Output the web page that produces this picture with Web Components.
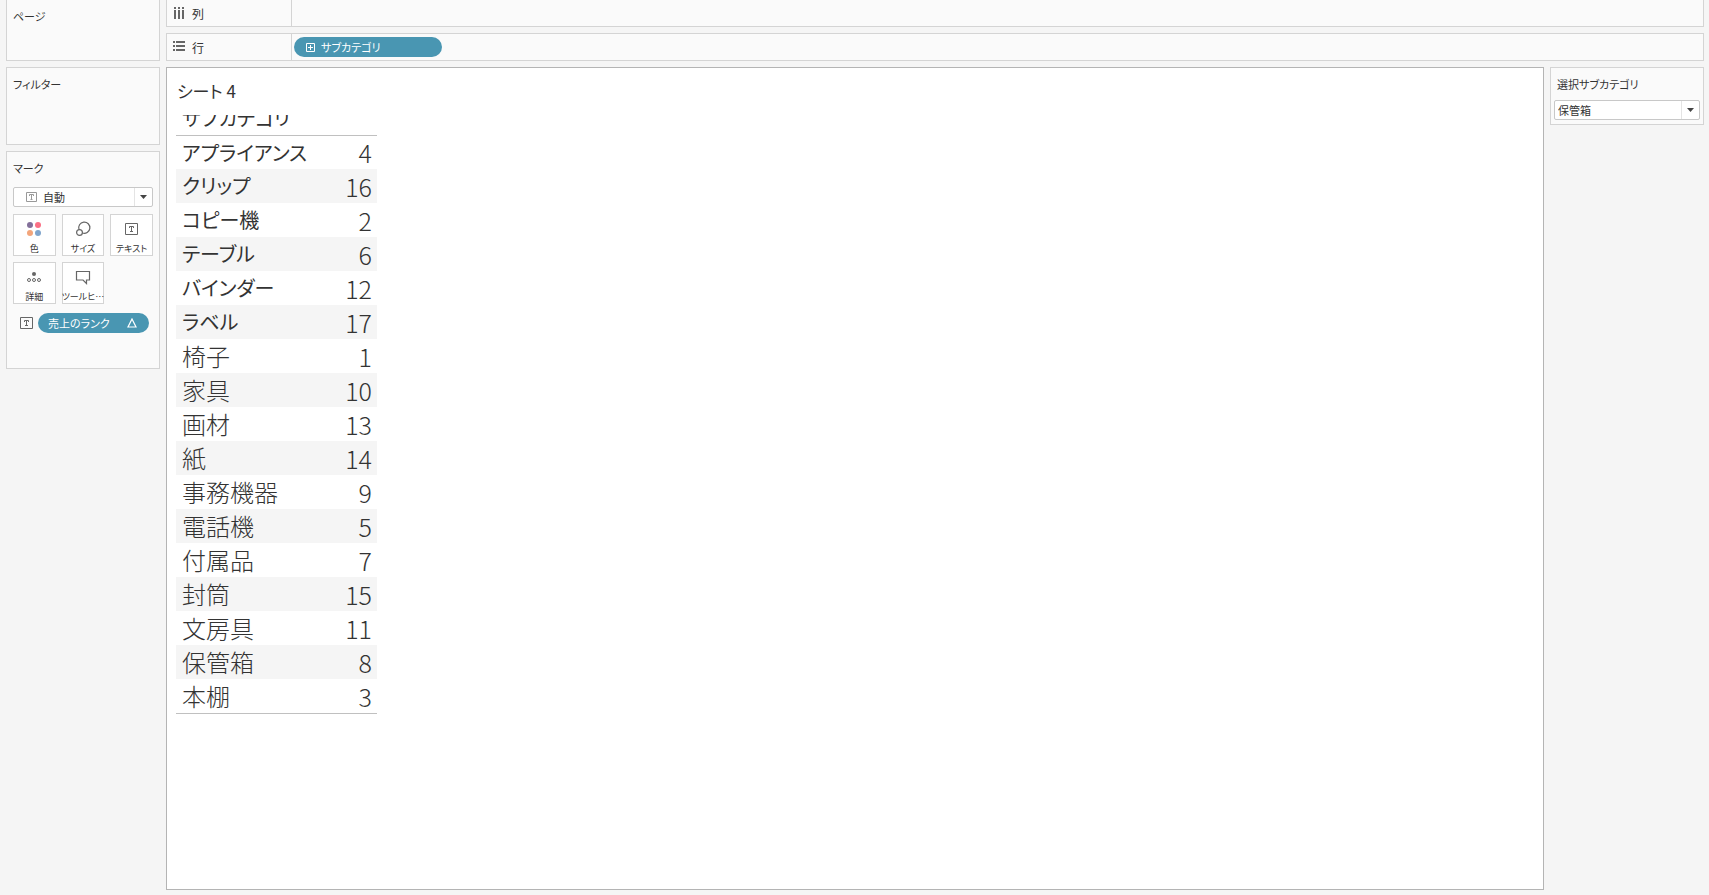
<!DOCTYPE html>
<html lang="ja">
<head>
<meta charset="UTF-8">
<meta name="viewport" content="width=device-width, initial-scale=1">
<title>シート 4</title>
<style>
    body {
        margin: 0;
        background-color: #f5f5f5;
        color: #333;
        font-family: "Noto Sans CJK JP", sans-serif;
        font-size: 11px;
        font-feature-settings: "palt";
    }
</style>
</head>
<body>
<sheet-app></sheet-app>

<script>
const ICONS = {
    columns: '<svg width="12" height="13" viewBox="0 0 12 13" fill="#666"><path d="M1 0h2v2H1zM5 0h2v2H5zM9 0h2v2H9zM1 3h2v9H1zM5 3h2v9H5zM9 3h2v9H9z"/></svg>',
    rows: '<svg width="12" height="12" viewBox="0 0 12 12" fill="#666"><path d="M0 0h2v2H0zM0 4h2v2H0zM0 8h2v2H0zM3 0h9v2H3zM3 4h9v2H3zM3 8h9v2H3z"/></svg>',
    plus: '<svg width="9" height="9" viewBox="0 0 9 9" fill="none" stroke="#fff"><path d="M.5.5h8v8h-8zM2 4.5h5M4.5 2v5"/></svg>',
    delta: '<svg width="10" height="10" viewBox="0 0 10 10" fill="none" stroke="#fff" stroke-width="1.2"><path d="M5 1L9 9H1z"/></svg>',
    text: '<svg width="13" height="12" viewBox="0 0 13 12" fill="none" stroke="#666"><path d="M.5.5h12v11H.5z"/><path d="M4.5 5V3.5h4V5M6.5 3.5v5M5 8.5h3"/></svg>',
    textSmall: '<svg width="11" height="10" viewBox="0 0 11 10" fill="none" stroke="#999"><path d="M.5.5h10v9H.5z"/><path d="M3.5 4V2.5h4V4M5.5 2.5v5M4.5 7.5h2"/></svg>',
    arrow: '<svg width="7" height="4" viewBox="0 0 7 4" fill="#444"><path d="M0 0h7L3.5 4z"/></svg>',
    color: '<svg width="16" height="16" viewBox="0 0 16 16"><circle cx="4" cy="4" r="3" fill="#83709a"/><circle cx="12" cy="4" r="3" fill="#fb7085"/><circle cx="4" cy="12" r="3" fill="#f3a57b"/><circle cx="12" cy="12" r="3" fill="#80a5cc"/></svg>',
    size: '<svg width="16" height="16" viewBox="0 0 16 16" fill="none" stroke="#666" stroke-width="1.2"><path d="M4 8.6A5.600 5.600 0 1 1 7.400 12"/><circle cx="4.500" cy="11.500" r="2.900"/></svg>',
    detail: '<svg width="16" height="16" viewBox="0 0 16 16" fill="none" stroke="#666"><circle cx="8" cy="5" r="2" fill="#666" stroke="none"/><circle cx="3" cy="11" r="1.500"/><circle cx="8" cy="11" r="1.500"/><circle cx="13" cy="11" r="1.500"/></svg>',
    tooltip: '<svg width="16" height="16" viewBox="0 0 16 16" fill="none" stroke="#666" stroke-width="1.2"><path d="M1.500 2.500h13v8.500h-3v3.500L8 11H1.500z"/></svg>'
};

class ShelfCard extends HTMLElement {
    constructor() {
        super();
        this.attachShadow({ mode: 'open' });
    }

    connectedCallback() {
        this.shadowRoot.innerHTML = `
            <style>
                :host {
                    display: block;
                    box-sizing: border-box;
                    padding: 8px 6px;
                    border: 1px solid #d4d4d4;
                    background-color: #fafafa;
                }
                h2 {
                    margin: 0;
                    font-size: 11px;
                    font-weight: 400;
                    line-height: 16px;
                }
            </style>
            <h2>${this.getAttribute('heading')}</h2>
            <slot></slot>
        `;
    }
}

class DropShelf extends HTMLElement {
    constructor() {
        super();
        this.attachShadow({ mode: 'open' });
    }

    connectedCallback() {
        this.shadowRoot.innerHTML = `
            <style>
                :host {
                    display: flex;
                    box-sizing: border-box;
                    height: 28px;
                    border: 1px solid #d4d4d4;
                    background-color: #fafafa;
                }
                .label {
                    display: flex;
                    align-items: center;
                    gap: 7px;
                    box-sizing: border-box;
                    width: 125px;
                    padding-left: 6px;
                    border-right: 1px solid #d4d4d4;
                    font-size: 12px;
                }
                .drop {
                    display: flex;
                    flex: 1;
                    align-items: center;
                    padding-left: 2px;
                }
            </style>
            <div class="label">${ICONS[this.getAttribute('icon')]}<span>${this.getAttribute('label')}</span></div>
            <div class="drop"><slot></slot></div>
        `;
    }
}

class FieldPill extends HTMLElement {
    constructor() {
        super();
        this.attachShadow({ mode: 'open' });
    }

    connectedCallback() {
        const before = this.hasAttribute('expand') ? ICONS.plus : '';
        const after = this.hasAttribute('calc') ? ICONS.delta : '';

        this.shadowRoot.innerHTML = `
            <style>
                :host {
                    display: block;
                }
                button {
                    display: flex;
                    align-items: center;
                    gap: 6px;
                    box-sizing: border-box;
                    width: 100%;
                    height: 20px;
                    padding: 0 12px 0 ${before ? 12 : 10}px;
                    border: 0;
                    border-radius: 10px;
                    background-color: #4996b2;
                    color: #fff;
                    font: inherit;
                    font-feature-settings: inherit;
                    text-align: left;
                }
                span {
                    flex: 1;
                }
            </style>
            <button type="button">${before}<span><slot></slot></span>${after}</button>
        `;
    }
}

class DropDown extends HTMLElement {
    constructor() {
        super();
        this.attachShadow({ mode: 'open' });
    }

    connectedCallback() {
        const icon = ICONS[this.getAttribute('icon')] || '';
        const options = this.getAttribute('options').split(',');

        this.shadowRoot.innerHTML = `
            <style>
                :host {
                    display: grid;
                    grid-template-columns: 1fr 19px;
                    align-items: center;
                    height: 20px;
                }
                select {
                    grid-area: 1 / 1 / 2 / 3;
                    box-sizing: border-box;
                    width: 100%;
                    height: 20px;
                    padding: 0 20px 0 ${icon ? 29 : 3}px;
                    border: 1px solid #c8c8c8;
                    border-radius: 2px;
                    background-color: #fff;
                    color: #333;
                    font: inherit;
                    font-feature-settings: inherit;
                    appearance: none;
                }
                .icon, .arrow {
                    display: flex;
                    align-items: center;
                    z-index: 1;
                    pointer-events: none;
                }
                .icon {
                    grid-area: 1 / 1;
                    padding-left: 13px;
                }
                .arrow {
                    grid-area: 1 / 2;
                    justify-content: center;
                    height: 18px;
                    padding-right: 2px;
                    border-left: 1px solid #e4e4e4;
                }
            </style>
            <select aria-label="${this.getAttribute('label')}">
                ${options.map(option => `<option>${option}</option>`).join('')}
            </select>
            <div class="icon">${icon}</div>
            <div class="arrow">${ICONS.arrow}</div>
        `;
    }
}

class MarkButton extends HTMLElement {
    constructor() {
        super();
        this.attachShadow({ mode: 'open' });
    }

    connectedCallback() {
        this.shadowRoot.innerHTML = `
            <style>
                :host {
                    display: block;
                    min-width: 0;
                }
                button {
                    display: flex;
                    flex-direction: column;
                    align-items: center;
                    justify-content: space-between;
                    box-sizing: border-box;
                    width: 100%;
                    height: 42px;
                    padding: 6px 0 0;
                    border: 1px solid #d4d4d4;
                    background-color: #fff;
                    color: #333;
                    font: inherit;
                    font-feature-settings: inherit;
                    font-size: 9px;
                    line-height: 12px;
                    white-space: nowrap;
                }
                .icon {
                    display: flex;
                    align-items: center;
                    height: 16px;
                }
            </style>
            <button type="button"><span class="icon">${ICONS[this.getAttribute('icon')]}</span><span><slot></slot></span></button>
        `;
    }
}

class MarksPanel extends HTMLElement {
    constructor() {
        super();
        this.attachShadow({ mode: 'open' });
        this.shadowRoot.innerHTML = `
            <style>
                :host {
                    display: block;
                    padding-top: 11px;
                }
                .buttons {
                    display: grid;
                    grid-template-columns: repeat(3, 1fr);
                    gap: 6px;
                    padding: 7px 0 9px;
                }
                .field {
                    display: flex;
                    align-items: center;
                    gap: 5px;
                    padding: 0 4px 0 7px;
                }
                field-pill {
                    flex: 1;
                }
            </style>
            <drop-down label="マーク" icon="textSmall" options="自動"></drop-down>
            <div class="buttons">
                <mark-button icon="color">色</mark-button>
                <mark-button icon="size">サイズ</mark-button>
                <mark-button icon="text">テキスト</mark-button>
                <mark-button icon="detail">詳細</mark-button>
                <mark-button icon="tooltip">ツールヒ…</mark-button>
            </div>
            <div class="field">${ICONS.text}<field-pill calc>売上のランク</field-pill></div>
        `;
    }
}

class RankTable extends HTMLElement {
    constructor() {
        super();
        this.attachShadow({ mode: 'open' });
        this._rows = [
            ['アプライアンス', 4],
            ['クリップ', 16],
            ['コピー機', 2],
            ['テーブル', 6],
            ['バインダー', 12],
            ['ラベル', 17],
            ['椅子', 1],
            ['家具', 10],
            ['画材', 13],
            ['紙', 14],
            ['事務機器', 9],
            ['電話機', 5],
            ['付属品', 7],
            ['封筒', 15],
            ['文房具', 11],
            ['保管箱', 8],
            ['本棚', 3]
        ];
        this.render();
    }

    render() {
        this.shadowRoot.innerHTML = `
            <style>
                :host {
                    display: block;
                    font-size: 24px;
                    font-weight: 300;
                    line-height: 34px;
                }
                table {
                    width: 201px;
                    border-bottom: 1px solid #c0c0c0;
                    border-spacing: 0;
                }
                th, td {
                    height: 34px;
                    padding: 0;
                    font-weight: inherit;
                    white-space: nowrap;
                }
                th {
                    padding-left: 6px;
                    text-align: left;
                }
                td {
                    padding-right: 5px;
                    font-size: 25px;
                    text-align: right;
                }
                thead th {
                    height: 20px;
                }
                /* the header is cut at the top when the row is too short */
                .clip {
                    display: flex;
                    align-items: flex-end;
                    height: 20px;
                    overflow: hidden;
                    font-size: 20px;
                    font-weight: 400;
                }
                .kana {
                    font-size: 20px;
                    font-weight: 400;
                }
                tbody tr:nth-child(even) {
                    background-color: #f5f5f5;
                }
                tbody tr:first-child > * {
                    height: 33px;
                    border-top: 1px solid #c0c0c0;
                    line-height: 33px;
                }
            </style>
            <table>
                <thead>
                    <tr><th scope="col" colspan="2"><div class="clip">サブカテゴリ</div></th></tr>
                </thead>
                <tbody>
                    ${this._rows.map(([name, rank]) => `<tr><th scope="row" class="${/^[ァ-ー]/.test(name) ? 'kana' : ''}">${name}</th><td>${rank}</td></tr>`).join('')}
                </tbody>
            </table>
        `;
    }
}

class SheetView extends HTMLElement {
    constructor() {
        super();
        this.attachShadow({ mode: 'open' });
    }

    connectedCallback() {
        this.shadowRoot.innerHTML = `
            <style>
                :host {
                    display: block;
                    box-sizing: border-box;
                    padding: 9px;
                    border: 1px solid #b4b4b4;
                    background-color: #fff;
                }
                h1 {
                    margin: 0;
                    padding: 0 1px 10px;
                    font-size: 17px;
                    font-weight: 400;
                    line-height: 28px;
                }
            </style>
            <h1>${this.getAttribute('heading')}</h1>
            <slot></slot>
        `;
    }
}

class SheetApp extends HTMLElement {
    constructor() {
        super();
        this.attachShadow({ mode: 'open' });
        this.shadowRoot.innerHTML = `
            <style>
                :host {
                    display: flex;
                    gap: 6px;
                    box-sizing: border-box;
                    min-height: 100vh;
                    padding: 0 5px 5px 6px;
                }
                aside {
                    display: flex;
                    flex-direction: column;
                    flex: none;
                    gap: 6px;
                    width: 154px;
                }
                main {
                    display: flex;
                    flex: 1;
                    flex-direction: column;
                    gap: 6px;
                    min-width: 0;
                }
                .work {
                    display: flex;
                    flex: 1;
                    gap: 6px;
                }
                sheet-view {
                    flex: 1;
                    min-width: 0;
                }
                .pages {
                    height: 61px;
                    border-top: 0;
                }
                .filters {
                    height: 78px;
                }
                .marks {
                    height: 218px;
                }
                .columns {
                    height: 27px;
                    border-top: 0;
                }
                .rows field-pill {
                    width: 148px;
                }
                .parameter {
                    padding-bottom: 4px;
                }
                .parameter drop-down {
                    margin: 8px -3px 0;
                }
            </style>
            <aside>
                <shelf-card class="pages" heading="ページ"></shelf-card>
                <shelf-card class="filters" heading="フィルター"></shelf-card>
                <shelf-card class="marks" heading="マーク"><marks-panel></marks-panel></shelf-card>
            </aside>
            <main>
                <drop-shelf class="columns" icon="columns" label="列"></drop-shelf>
                <drop-shelf class="rows" icon="rows" label="行"><field-pill expand>サブカテゴリ</field-pill></drop-shelf>
                <div class="work">
                    <sheet-view heading="シート 4"><rank-table></rank-table></sheet-view>
                    <aside>
                        <shelf-card class="parameter" heading="選択サブカテゴリ">
                            <drop-down label="選択サブカテゴリ" options="保管箱"></drop-down>
                        </shelf-card>
                    </aside>
                </div>
            </main>
        `;
    }
}

customElements.define('shelf-card', ShelfCard);
customElements.define('drop-shelf', DropShelf);
customElements.define('field-pill', FieldPill);
customElements.define('drop-down', DropDown);
customElements.define('mark-button', MarkButton);
customElements.define('marks-panel', MarksPanel);
customElements.define('rank-table', RankTable);
customElements.define('sheet-view', SheetView);
customElements.define('sheet-app', SheetApp);
</script>
</body>
</html>
